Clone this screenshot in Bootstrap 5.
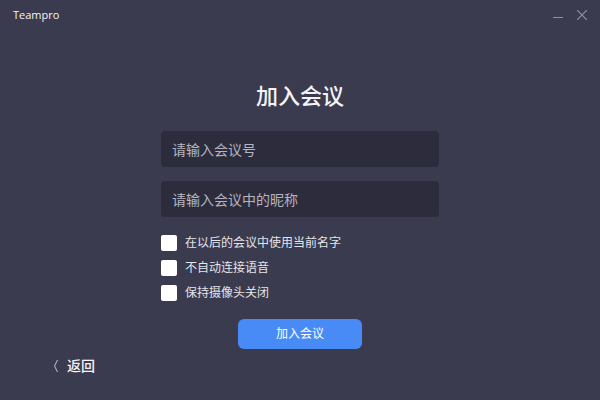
<!DOCTYPE html>
<html lang="zh-CN">
<head>
<meta charset="utf-8">
<meta name="viewport" content="width=device-width, initial-scale=1">
<title>Teampro</title>
<link href="https://cdn.jsdelivr.net/npm/bootstrap@5.3.0/dist/css/bootstrap.min.css" rel="stylesheet">
<style>
body { background: #3b3b4f; color: #f4f4f8; font-family: "Noto Sans", "Noto Sans CJK SC", sans-serif; font-size: 12px; line-height: 20px; }
.title-bar { height: 30px; padding: 0 13px; }
.app-name { font-family: "Open Sans", "Noto Sans", sans-serif; font-size: 11px; font-weight: 500; }
.window-btn { color: #91919c; line-height: 0; }
.window-btn svg { display: block; }
.window-controls { gap: 14px; }
.join-form { width: 100%; max-width: 278px; padding-top: 49px; }
.join-title { font-size: 22px; font-weight: 500; line-height: 32px; margin-bottom: 20px; }
.join-input, .join-input:focus { height: 36px; padding: 0 11px; margin-bottom: 14px; border: 0; border-radius: 4px; background: #2d2c3d; color: #f4f4f8; font-size: 14px; }
.join-input::placeholder { color: #b6b5bf; }
.option-row { height: 24px; gap: 8px; color: #e4e4ea; }
.option-list { display: grid; gap: 1px; margin-bottom: 14px; }
.option-box.form-check-input { width: 16px; height: 16px; border: 0; border-radius: 2px; background-color: #fff; }
.option-box.form-check-input:checked { background-color: #498bf6; }
.join-btn { width: 124px; height: 30px; border-radius: 6px; background: #498bf6; color: #fff; font-size: 12px; line-height: 20px; }
.join-btn:hover { background: #3a7ced; color: #fff; }
.back-link { gap: 8px; font-size: 14px; font-weight: 500; color: #f4f4f8; }
.back-row { padding: 7px 53px; }
</style>
</head>
<body class="min-vh-100 d-flex flex-column">
<header class="title-bar d-flex align-items-center justify-content-between">
  <span class="app-name">Teampro</span>
  <div class="window-controls d-flex align-items-center">
    <button type="button" class="window-btn btn p-0 border-0" aria-label="最小化">
      <svg width="10" height="12" viewBox="0 0 10 12" fill="none" stroke="currentColor"><path d="M0 8.5H10"/></svg>
    </button>
    <button type="button" class="window-btn btn p-0 border-0" aria-label="关闭">
      <svg width="10" height="10" viewBox="0 0 10 10" fill="none" stroke="currentColor" stroke-width="1.2"><path d="M0 0L10 10M10 0L0 10"/></svg>
    </button>
  </div>
</header>
<main>
  <form class="join-form mx-auto d-flex flex-column">
    <h1 class="join-title text-center">加入会议</h1>
    <input class="join-input form-control shadow-none" type="text" placeholder="请输入会议号" aria-label="会议号">
    <input class="join-input form-control shadow-none" type="text" placeholder="请输入会议中的昵称" aria-label="昵称">
    <div class="option-list">
      <div class="option-row d-flex align-items-center">
        <input class="option-box form-check-input m-0 flex-shrink-0" type="checkbox" id="keepName">
        <label for="keepName">在以后的会议中使用当前名字</label>
      </div>
      <div class="option-row d-flex align-items-center">
        <input class="option-box form-check-input m-0 flex-shrink-0" type="checkbox" id="noAudio">
        <label for="noAudio">不自动连接语音</label>
      </div>
      <div class="option-row d-flex align-items-center">
        <input class="option-box form-check-input m-0 flex-shrink-0" type="checkbox" id="noCamera">
        <label for="noCamera">保持摄像头关闭</label>
      </div>
    </div>
    <button type="submit" class="join-btn btn border-0 p-0 align-self-center">加入会议</button>
  </form>
</main>
<footer class="back-row d-flex">
  <a class="back-link d-inline-flex align-items-center text-decoration-none" href="#">
    <svg width="6" height="14" viewBox="0 0 6 14" fill="none" stroke="#c4c4cd" aria-hidden="true"><path d="M4.5 1L1.5 7L4.5 13"/></svg>
    <span>返回</span>
  </a>
</footer>
<script src="https://cdn.jsdelivr.net/npm/bootstrap@5.3.0/dist/js/bootstrap.bundle.min.js"></script>
</body>
</html>
